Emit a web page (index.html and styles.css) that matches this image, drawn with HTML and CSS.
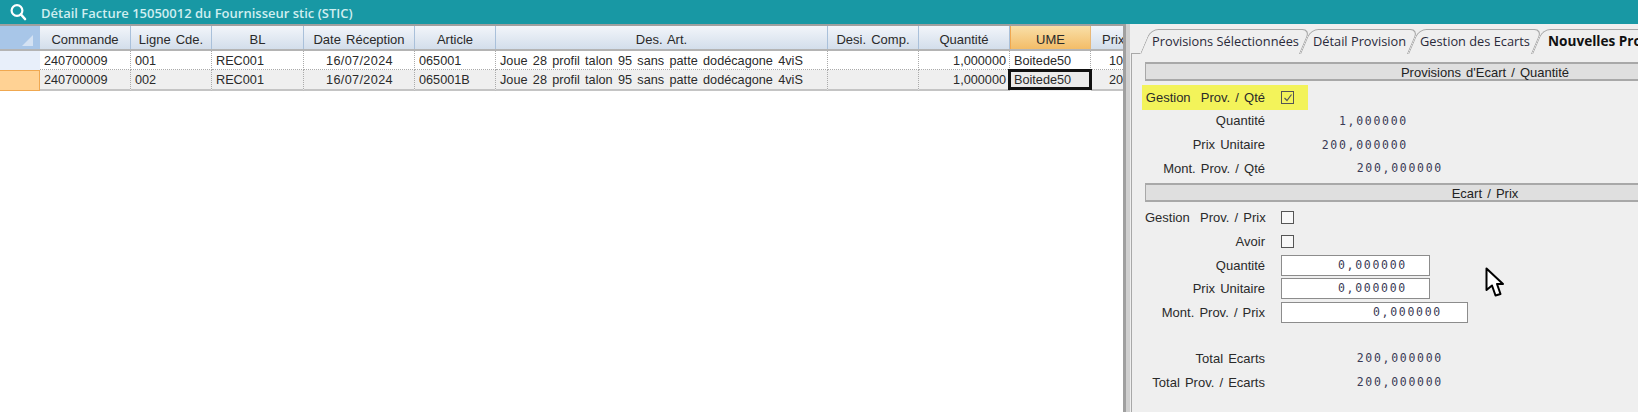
FILE: index.html
```html
<!DOCTYPE html>
<html lang="fr">
<head>
<meta charset="utf-8">
<title>Détail Facture</title>
<link rel="stylesheet" href="styles.css">
</head>
<body>
<header class="titlebar">
  <svg class="search" width="18" height="18" viewBox="0 0 18 18"><circle cx="8" cy="7.5" r="5.4" fill="none" stroke="#fff" stroke-width="2.2"/><path d="M12 11.5 16 16" stroke="#fff" stroke-width="2.6" stroke-linecap="round"/></svg>
  <span class="title">Détail Facture 15050012 du Fournisseur stic (STIC)</span>
</header>
<main class="main">
  <section class="grid-pane">
    <div class="row head">
      <div class="corner"><i class="tri"></i></div>
      <div>Commande</div><div>Ligne Cde.</div><div>BL</div><div>Date Réception</div><div>Article</div><div>Des. Art.</div><div>Desi. Comp.</div><div>Quantité</div><div class="sel-col">UME</div><div class="prix-h">Prix</div>
    </div>
    <div class="row body">
      <div class="rh"></div>
      <div>240700009</div><div>001</div><div>REC001</div><div class="c">16/07/2024</div><div>065001</div><div>Joue 28 profil talon 95 sans patte dodécagone 4viS</div><div></div><div class="r">1,000000</div><div>Boitede50</div><div class="prix">100,000000</div>
    </div>
    <div class="row body alt">
      <div class="rh cur"></div>
      <div>240700009</div><div>002</div><div>REC001</div><div class="c">16/07/2024</div><div>065001B</div><div>Joue 28 profil talon 95 sans patte dodécagone 4viS</div><div></div><div class="r">1,000000</div><div class="focus">Boitede50</div><div class="prix">200,000000</div>
    </div>
  </section>
  <div class="splitter"></div>
  <section class="side">
    <nav class="tabs">
      <div class="tab t1">Provisions Sélectionnées</div>
      <div class="tab t2">Détail Provision</div>
      <div class="tab t3">Gestion des Ecarts</div>
      <div class="tab t4">Nouvelles Provisions</div>
    </nav>
    <div class="form">
      <div class="sect s1">Provisions d'Ecart / Quantité</div>
      <div class="frow hl"><label>Gestion&nbsp; Prov. / Qté</label><span class="chk"><svg width="10" height="10" viewBox="0 0 10 10"><path d="M1.5 5 4 7.5 8.5 1.5" fill="none" stroke="#555" stroke-width="1.2"/></svg></span></div>
      <div class="frow"><label>Quantité</label><span class="val w1">1,000000</span></div>
      <div class="frow"><label>Prix Unitaire</label><span class="val w1">200,000000</span></div>
      <div class="frow"><label>Mont. Prov. / Qté</label><span class="val w2">200,000000</span></div>
      <div class="sect s2">Ecart / Prix</div>
      <div class="frow"><label>Gestion&nbsp; Prov. / Prix</label><span class="chk"></span></div>
      <div class="frow"><label>Avoir</label><span class="chk"></span></div>
      <div class="frow"><label>Quantité</label><span class="val w1 inp">0,000000</span></div>
      <div class="frow"><label>Prix Unitaire</label><span class="val w1 inp">0,000000</span></div>
      <div class="frow"><label>Mont. Prov. / Prix</label><span class="val w2 inp">0,000000</span></div>
      <div class="frow gap"><label>Total Ecarts</label><span class="val w2">200,000000</span></div>
      <div class="frow"><label>Total Prov. / Ecarts</label><span class="val w2">200,000000</span></div>
    </div>
  </section>
</main>
<svg class="cursor" width="20" height="32" viewBox="0 0 20 32"><path d="M1.5 1.5V23L7 18.5 10.5 28.5 15.5 27 12 17H18Z" fill="#fff" stroke="#000" stroke-width="2" stroke-linejoin="round"/></svg>
</body>
</html>
```
FILE: styles.css
```css
* { box-sizing: border-box; }
html, body { margin: 0; height: 412px; overflow: hidden; }
body { background: #efefef; font-family: "Liberation Sans", Arial, sans-serif; font-size: 12.7px; color: #2a2a2a; display: flex; flex-direction: column; }

.titlebar { height: 24px; background: #1898a4; display: flex; align-items: center; flex: none; }
.search { margin-left: 9px; }
.title { margin-left: 14px; padding-top: 1px; font-family: "Open Sans", sans-serif; font-size: 13px; font-weight: 600; color: #cfeef0; white-space: nowrap; }

.main { flex: 1; display: flex; min-height: 0; }

.grid-pane { width: 1123px; flex: none; background: #fff; border-top: 2px solid #a0a0a0; overflow: hidden; }
.row { display: grid; grid-template-columns: 40px 91px 81px 92px 111px 81px 332px 91px 91px 81px 100px; white-space: nowrap; }
.head { height: 25px; border-bottom: 2px solid #b4b4b4; word-spacing: 1.5px; font-size: 13px; }
.head > div { background: linear-gradient(#f2f5fa, #d3deeb); border-right: 1px solid #a9c0da; display: flex; align-items: center; justify-content: center; padding-top: 3px; }
.head > .corner { background: #a8c6e8; justify-content: flex-end; align-items: flex-end; padding: 0 6px 3px 0; border-right: 1px solid #a8c6e8; }
.tri { width: 0; height: 0; border-left: 11px solid transparent; border-bottom: 11px solid #d4e2f3; }
.head > .sel-col { background: linear-gradient(#f9dfa8, #f3bd68); border-left: 1px solid #f0a850; border-right-color: #e8b878; }
.head > .prix-h { justify-content: flex-start; padding-left: 11px; }

.body { height: 19px; line-height: 20px; word-spacing: 1.8px; }
.body > div { padding: 0 3px 0 4px; border-right: 1px dotted #aaa; border-bottom: 1px dotted #aaa; overflow: hidden; }
.alt { background: #efefef; height: 21px; line-height: 21px; }
.alt > div { border-bottom: 2px solid #c4c4c4; }
.body > .rh { background: #e8effa; border-bottom: 0; border-right: 0; }
.alt > .cur { background: #ffd294; border: 1px solid #f0a850; border-width: 1px 1px 1px 0; }
.c { text-align: center; letter-spacing: 0.35px; }
.r { text-align: right; }
.alt > .focus { border: 3px solid #111; margin: -1px -1px 0 -2px; padding: 0 0 0 3px; height: 21px; line-height: 17px; background: #ebebeb; position: relative; }
.body > .prix { padding-left: 18px; }

.splitter { width: 7px; flex: none; border-left: 3px solid #a0a0a0; background: #d0d0d0; }

.side { flex: 1; min-width: 0; overflow: hidden; display: flex; flex-direction: column; background: #efefef; }

.tabs { display: flex; padding: 5px 0 0 10px; height: 30px; flex: none; font-family: "Open Sans", sans-serif; font-size: 12.8px; color: #2a2a3a; white-space: nowrap; position: relative; }
.tab { position: relative; height: 25px; line-height: 24px; padding-left: 12px; flex: none; }
.tab::before { content: ""; position: absolute; inset: 0; border: 1px solid #a8a8a8; border-bottom: 0; border-radius: 8px 8px 0 0; transform: skewX(-23deg); transform-origin: bottom left; }
.t1 { width: 160px; }
.t2 { width: 108px; padding-left: 13px; }
.t3 { width: 124px; }
.t4 { width: 200px; font-size: 13.6px; font-weight: 700; color: #111; padding-left: 16px; }
.tabs::before { content: ""; position: absolute; left: 1px; bottom: 0; width: 9px; border-bottom: 1px solid #a8a8a8; }

.form { flex: 1; margin-left: 1px; border-left: 1px solid #a8a8a8; padding: 8px 0 0 13px; font-size: 13px; word-spacing: 1.5px; }
.sect { width: 680px; height: 19px; background: #dfdfdf; border: 1px solid #a8a8a8; border-width: 2px 1px; text-align: center; color: #222; line-height: 17px; }
.s1 { margin-bottom: 4px; }
.s2 { margin-top: 3px; margin-bottom: 4px; }

.frow { display: grid; grid-template-columns: 120px 149px; column-gap: 16px; height: 23.7px; align-items: center; width: 480px; }
.frow label { text-align: right; white-space: nowrap; }
.frow.hl { width: 166px; height: 25px; margin: 0 0 -1px -3px; padding-left: 3px; background: #f3f35a; grid-template-columns: 120px 14px; }
.frow.gap { margin-top: 22px; }

.chk { width: 13px; height: 13px; border: 1px solid #555; background: #f8f8f8; display: flex; align-items: center; justify-content: center; }
.hl .chk { background: transparent; }

.val { font-family: "DejaVu Sans Mono", monospace; font-size: 11.5px; letter-spacing: 1.7px; color: #3a3a55; text-align: right; padding-right: 22px; white-space: nowrap; word-spacing: 0; }
.w1 { width: 149px; }
.w2 { width: 187px; padding-right: 25px; }
.inp { background: #fff; border: 1px solid #8c8c8c; height: 21px; line-height: 19px; }

.cursor { position: absolute; left: 1485px; top: 267px; }
```
